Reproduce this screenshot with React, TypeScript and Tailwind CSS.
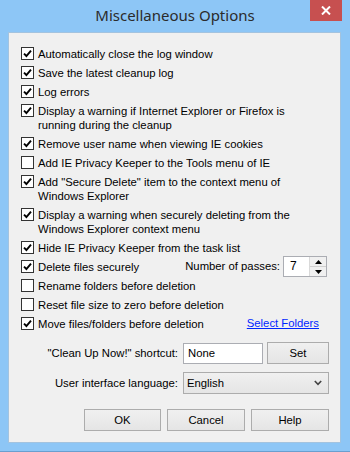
import React from 'react';

type Option = { lines: string[]; checked: boolean; extra?: 'passes' | 'folders' };

const options: Option[] = [
  { lines: ['Automatically close the log window'], checked: true },
  { lines: ['Save the latest cleanup log'], checked: true },
  { lines: ['Log errors'], checked: true },
  { lines: ['Display a warning if Internet Explorer or Firefox is', 'running during the cleanup'], checked: true },
  { lines: ['Remove user name when viewing IE cookies'], checked: true },
  { lines: ['Add IE Privacy Keeper to the Tools menu of IE'], checked: false },
  { lines: ['Add "Secure Delete" item to the context menu of', 'Windows Explorer'], checked: true },
  { lines: ['Display a warning when securely deleting from the', 'Windows Explorer context menu'], checked: true },
  { lines: ['Hide IE Privacy Keeper from the task list'], checked: true },
  { lines: ['Delete files securely'], checked: true, extra: 'passes' },
  { lines: ['Rename folders before deletion'], checked: false },
  { lines: ['Reset file size to zero before deletion'], checked: false },
  { lines: ['Move files/folders before deletion'], checked: true, extra: 'folders' },
];

const CheckBox = ({ checked }: { checked: boolean }) => (
  <span className="w-[13px] h-[13px] border border-[#333333] bg-white flex items-center justify-center shrink-0">
    {checked && (
      <svg width="9" height="9" viewBox="0 0 9 9">
        <path d="M1 4.6 L3.4 7 L8 1.6" stroke="#000" strokeWidth="1.9" fill="none" />
      </svg>
    )}
  </span>
);

// plain win8 push button look, alignment added per use
const winButton =
  'h-[22px] border border-[#acacac] bg-gradient-to-b from-[#f0f0f0] to-[#e5e5e5] flex items-center text-black';

const PassesSpin = () => (
  <div className="flex items-center gap-[3px]">
    <span>Number of passes:</span>
    <div className="w-[44px] h-[21px] border border-[#abadb3] bg-white flex">
      <span className="flex-1 pl-[6px] leading-[19px] text-[12px]">7</span>
      <div className="w-[17px] flex flex-col border-l border-[#d9d9d9]">
        <div className="flex-1 flex items-center justify-center bg-[#f0f0f0] border-b border-[#d0d0d0]">
          <svg width="7" height="4" viewBox="0 0 7 4"><path d="M0 4 L3.5 0 L7 4 Z" fill="#000" /></svg>
        </div>
        <div className="flex-1 flex items-center justify-center bg-[#f0f0f0]">
          <svg width="7" height="4" viewBox="0 0 7 4"><path d="M0 0 L7 0 L3.5 4 Z" fill="#000" /></svg>
        </div>
      </div>
    </div>
  </div>
);

export default function App() {
  return (
    <div
      className="w-[350px] h-[452px] bg-[#8dc6f6] flex flex-col border-b border-[#6a9fcf] text-black"
      style={{ fontFamily: '"Liberation Sans", Arial, sans-serif' }}
    >
      {/* title bar */}
      <div className="relative h-[32px] shrink-0 flex items-center justify-center">
        <span
          className="text-[15px] text-[#2b2b2b] mt-[-1px]"
          style={{ fontFamily: '"Noto Sans", "Open Sans", sans-serif' }}
        >
          Miscellaneous Options
        </span>
        <div className="absolute top-0 right-[8px] w-[32px] h-[21px] bg-[#c75050] flex items-center justify-center">
          <svg width="10" height="9" viewBox="0 0 10 9">
            <path d="M1 0.5 L9 8.5 M9 0.5 L1 8.5" stroke="#fff" strokeWidth="2" />
          </svg>
        </div>
      </div>

      {/* client area */}
      <div className="ml-[8px] mr-[9px] mb-[8px] flex-1 bg-[#f0f0f0] border border-[#a3c3df] text-[11.3px] flex flex-col">
        <div className="pt-[11px] pl-[12px] pr-[13px] flex flex-col">
          {options.map((o, i) => (
            <div key={i} className="flex items-start">
              <div className="h-[19px] flex items-center">
                <CheckBox checked={o.checked} />
              </div>
              <div className="pl-[4px] py-[2.5px] leading-[14px] whitespace-nowrap">
                {o.lines.map((l, j) => (
                  <div key={j}>{l}</div>
                ))}
              </div>
              {o.extra === 'passes' && (
                <div className="ml-auto h-[19px] flex items-center">
                  <PassesSpin />
                </div>
              )}
              {o.extra === 'folders' && (
                <div className="ml-auto mr-[8px] h-[19px] flex items-center">
                  <span className="text-[#0026ff] underline">Select Folders</span>
                </div>
              )}
            </div>
          ))}
        </div>

        <div className="mt-[9px] pr-[11px] flex flex-col gap-[8px]">
          <div className="flex items-center">
            <span className="flex-1 text-right pr-[5px]">"Clean Up Now!" shortcut:</span>
            <div className="w-[80px] h-[21px] border border-[#abadb3] bg-white pl-[4px] leading-[19px]">None</div>
            <div className={`${winButton} justify-center w-[62px] ml-[4px]`}>Set</div>
          </div>
          <div className="flex items-center">
            <span className="flex-1 text-right pr-[5px]">User interface language:</span>
            <div className={`${winButton} justify-between w-[146px] pl-[3px] pr-[6px]`}>
              <span>English</span>
              <svg width="8" height="6" viewBox="0 0 8 6">
                <path d="M0.8 1 L4 4.4 L7.2 1" stroke="#444" strokeWidth="1.6" fill="none" />
              </svg>
            </div>
          </div>
        </div>

        <div className="mt-[15px] pr-[11px] flex justify-end gap-[6px]">
          <div className={`${winButton} justify-center w-[77px] border-[#3399ff]`}>OK</div>
          <div className={`${winButton} justify-center w-[78px]`}>Cancel</div>
          <div className={`${winButton} justify-center w-[78px]`}>Help</div>
        </div>
      </div>
    </div>
  );
}
